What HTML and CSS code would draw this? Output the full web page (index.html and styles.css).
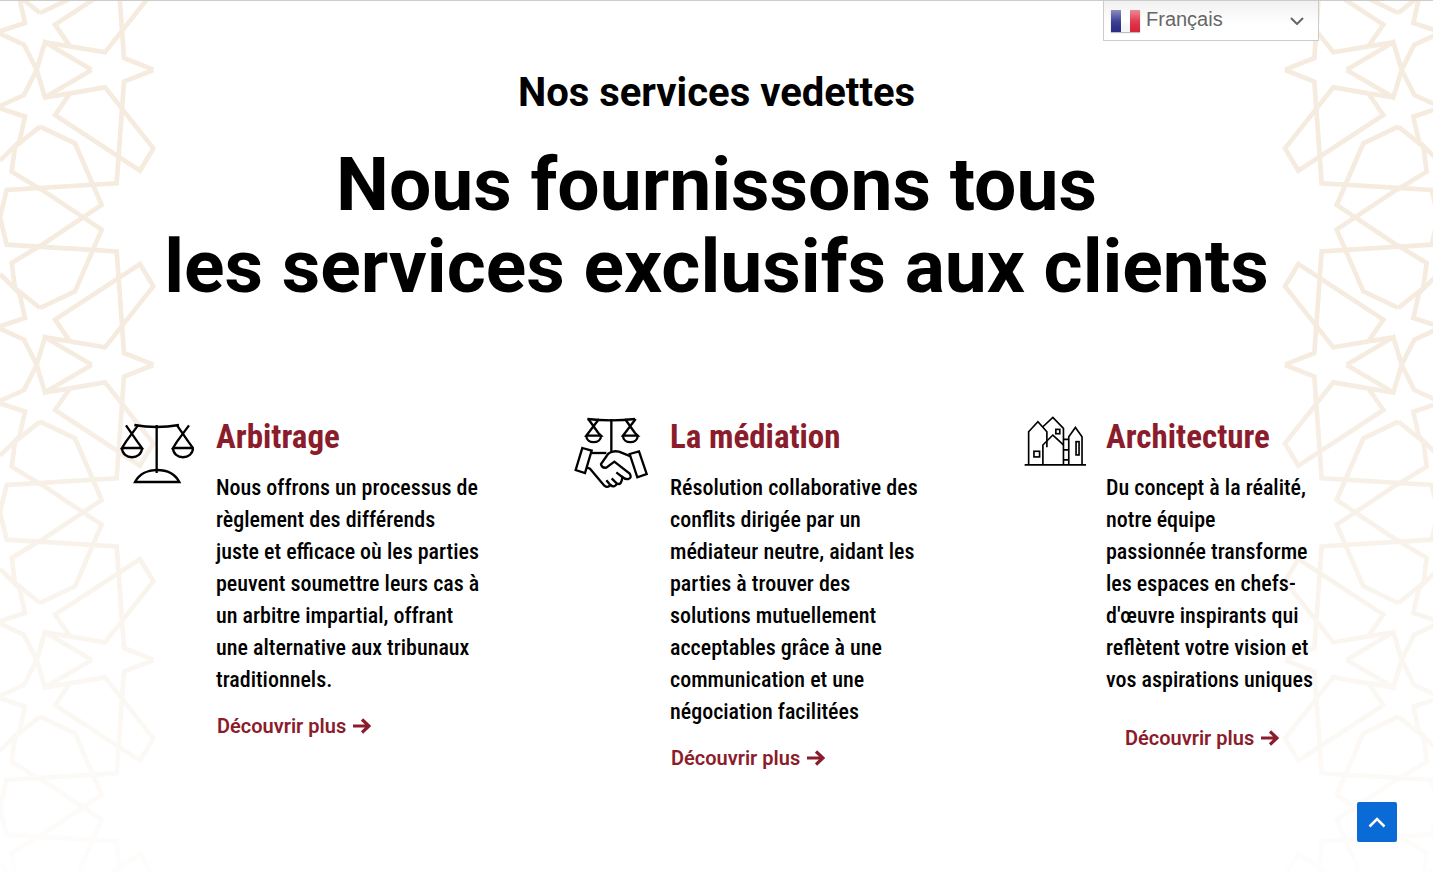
FILE: index.html
```html
<!DOCTYPE html>
<html>
<head>
    <meta charset="UTF-8">
    <title>Nos services vedettes</title>
    <link rel="stylesheet" href="styles.css">
</head>
<body>
    <!-- Star pattern down both sides of the page -->
    <svg class="bg-pattern" viewBox="0 0 4299 2616" aria-hidden="true">
        <defs>
            <g id="half">
                <polyline points="460,210 372,245 350,550 20,570 0,652"/>
                <polyline points="275,210 135,292 110,210 72,285 0,318"/>
                <polyline points="210,280 315,262 460,445 420,512 165,345 210,280"/>
                <polyline points="135,292 210,280"/>
                <polyline points="0,325 75,350 58,425 0,482"/>
                <polyline points="120,380 45,440 35,515 125,570"/>
                <polyline points="120,380 225,430 305,615 125,735"/>
            </g>
            <g id="tile">
                <use href="#half"/>
                <use href="#half" transform="matrix(1 0 0 -1 0 1304)"/>
            </g>
            <g id="column">
                <use href="#tile" transform="translate(0 -885)"/>
                <use href="#tile"/>
                <use href="#tile" transform="translate(0 885)"/>
                <use href="#tile" transform="translate(0 1770)"/>
            </g>
        </defs>
        <use href="#column"/>
        <use href="#column" transform="matrix(-1 0 0 1 4315 0)"/>
    </svg>

    <div class="lang-select">
        <svg class="flag" viewBox="0 0 29 22">
            <defs>
                <linearGradient id="gloss" x1="0" y1="0" x2="0" y2="1">
                    <stop offset="0" stop-color="#fff" stop-opacity="0.45"/>
                    <stop offset="0.5" stop-color="#fff" stop-opacity="0.1"/>
                    <stop offset="1" stop-color="#000" stop-opacity="0.04"/>
                </linearGradient>
            </defs>
            <rect width="10" height="22" fill="#2c2f8c"/>
            <rect x="10" width="9" height="22" fill="#fff"/>
            <rect x="19" width="10" height="22" fill="#e0283f"/>
            <rect width="29" height="22" fill="url(#gloss)"/>
        </svg>
        <span class="lang-name">Français</span>
        <svg class="lang-arrow" viewBox="0 0 14 8"><polyline points="1,1 7,7 13,1"/></svg>
    </div>

    <header class="intro">
        <h3>Nos services vedettes</h3>
        <h1>Nous fournissons tous<br>les services exclusifs aux clients</h1>
    </header>

    <section class="services">
        <article class="service">
            <div class="service-icon">
                <svg class="icon-scales" viewBox="30 40 222 186">
                    <path d="M73 46 Q140 58 207 46"/>
                    <path d="M140 46 V190"/>
                    <path d="M75 217 H208 C195 192 168 181 141 181 C115 181 88 192 75 217 Z"/>
                    <path d="M48 47 L82 96 M84 47 L48 96 L36 115 H96 L82 96"/>
                    <path d="M36 115 C36 152 96 152 96 115"/>
                    <path d="M201 47 L235 96 M237 47 L201 96 L189 115 H249 L235 96"/>
                    <path d="M189 115 C189 152 249 152 249 115"/>
                </svg>
            </div>
            <div class="service-body">
                <h4>Arbitrage</h4>
                <p>Nous offrons un processus de<br>règlement des différends<br>juste et efficace où les parties<br>peuvent soumettre leurs cas à<br>un arbitre impartial, offrant<br>une alternative aux tribunaux<br>traditionnels.</p>
                <a class="more" href="#">Découvrir plus <svg viewBox="0 0 18 16"><path d="M0 8 H16 M9 1.5 L16 8 L9 14.5"/></svg></a>
            </div>
        </article>

        <article class="service">
            <div class="service-icon">
                <svg class="icon-hands" viewBox="25 18 225 222">
                    <path d="M65 30 Q137 38 208 30"/>
                    <path d="M137 30 V128"/>
                    <path d="M68 30 L98 72 M100 30 L68 72 L62 80 H106 L98 72"/>
                    <path d="M62 80 C62 106 106 106 106 80"/>
                    <path d="M178 30 L208 72 M210 30 L178 72 L172 80 H216 L208 72"/>
                    <path d="M172 80 C172 106 216 106 216 80"/>
                    <path d="M50 117 L78 125 L58 192 L30 183 Z"/>
                    <path d="M192 135 L220 127 L243 195 L215 205 Z"/>
                    <path d="M78 132 H122"/>
                    <path d="M195 142 L160 128 Q140 124 128 134 L106 165 Q108 178 122 176 L146 158 L192 194 Q200 206 188 210 Q178 212 168 202"/>
                    <path d="M62 175 L73 179 L116 230 Q126 238 134 228 L122 214"/>
                    <path d="M134 228 Q146 238 154 224 L138 208"/>
                    <path d="M154 224 Q168 230 170 204 L152 190"/>
                </svg>
            </div>
            <div class="service-body">
                <h4>La médiation</h4>
                <p>Résolution collaborative des<br>conflits dirigée par un<br>médiateur neutre, aidant les<br>parties à trouver des<br>solutions mutuellement<br>acceptables grâce à une<br>communication et une<br>négociation facilitées</p>
                <a class="more" href="#">Découvrir plus <svg viewBox="0 0 18 16"><path d="M0 8 H16 M9 1.5 L16 8 L9 14.5"/></svg></a>
            </div>
        </article>

        <article class="service service-narrow">
            <div class="service-icon">
                <svg class="icon-houses" viewBox="28 18 190 150">
                    <path d="M30 165 H215"/>
                    <path d="M42 165 V65 L70 35 L97 65 V112"/>
                    <path d="M85 50 L115 22 L147 55 V165"/>
                    <path d="M85 165 V105 L115 75 L147 105"/>
                    <path d="M163 165 V80 L183 52 L203 80 V165"/>
                    <path d="M147 88 H163 M147 120 H163 M147 150 H163"/>
                    <rect x="58" y="124" width="17" height="17"/>
                    <rect x="124" y="58" width="12" height="13"/>
                    <rect x="185" y="95" width="9" height="40"/>
                </svg>
            </div>
            <div class="service-body">
                <h4>Architecture</h4>
                <p>Du concept à la réalité,<br>notre équipe<br>passionnée transforme<br>les espaces en chefs-<br>d'œuvre inspirants qui<br>reflètent votre vision et<br>vos aspirations uniques</p>
                <a class="more" href="#">Découvrir plus <svg viewBox="0 0 18 16"><path d="M0 8 H16 M9 1.5 L16 8 L9 14.5"/></svg></a>
            </div>
        </article>
    </section>

    <a class="to-top" href="#"><svg viewBox="0 0 18 11"><polyline points="1.5,9.5 9,2 16.5,9.5"/></svg></a>
</body>
</html>
```
FILE: styles.css
```css
body {
    margin: 0;
    height: 871px;
    overflow: hidden;
    position: relative;
    border-top: 1px solid #ccc;
    background-color: #fff;
    font-family: Roboto, Arial, sans-serif;
    color: #000;
}

.bg-pattern {
    position: absolute;
    top: -1px;
    left: 0;
    width: 1433px;
    height: 872px;
    fill: none;
    stroke: #f5ebdf;
    stroke-width: 14;
    filter: blur(0.5px);
    -webkit-mask-image: linear-gradient(#000 0, #000 38%, rgba(0, 0, 0, 0.1) 100%);
    mask-image: linear-gradient(#000 0, #000 38%, rgba(0, 0, 0, 0.1) 100%);
}

.lang-select {
    position: absolute;
    top: 0;
    left: 1103px;
    width: 216px;
    height: 40px;
    box-sizing: border-box;
    display: flex;
    align-items: center;
    padding: 0 14px 2px 7px;
    border: 1px solid #ccc;
    border-top: none;
    background: linear-gradient(#f1f1f1, #fff 60%);
}

.flag {
    width: 29px;
    height: 22px;
    margin-top: 2px;
    box-shadow: 0 1px 1px rgba(0, 0, 0, 0.25);
}

.lang-name {
    flex: 1;
    margin-left: 6px;
    font-family: "Liberation Sans", Arial, sans-serif;
    font-size: 20px;
    color: #666;
}

.lang-arrow {
    width: 14px;
    height: 8px;
    margin-top: 2px;
    fill: none;
    stroke: #666;
    stroke-width: 2;
}

.intro {
    position: relative;
    padding-top: 68px;
    text-align: center;
}

.intro h3 {
    margin: 0;
    font-size: 40px;
    line-height: 48px;
    font-weight: 700;
}

.intro h1 {
    margin: 26px 0 0;
    font-size: 75px;
    line-height: 82px;
    font-weight: 700;
}

.services {
    position: relative;
    display: grid;
    grid-template-columns: 454px 450px 1fr;
    margin-top: 110px;
    padding-left: 120px;
}

.service {
    display: flex;
}

.service-icon {
    flex: 0 0 96px;
    margin-top: -2px;
}

.service-narrow .service-icon {
    flex-basis: 82px;
}

.service-icon svg {
    display: block;
    fill: none;
    stroke: #000;
    stroke-width: 7;
}

.icon-scales {
    width: 74px;
    height: 62px;
    margin-top: 8px;
}

.icon-hands {
    width: 75px;
    height: 74px;
}

.icon-houses {
    width: 63px;
    height: 50px;
    margin-top: 1px;
    stroke-width: 5 !important;
}

.service-body h4 {
    margin: 0;
    font-size: 33px;
    line-height: 40px;
    font-weight: 700;
    font-stretch: 75%;
    color: #8b1c2b;
}

.service-body p {
    margin: 15px 0 0;
    font-size: 22px;
    line-height: 32px;
    font-weight: 500;
    font-stretch: 75%;
    white-space: nowrap;
}

.more {
    display: inline-flex;
    align-items: center;
    gap: 7px;
    margin: 18px 0 0 1px;
    font-size: 20px;
    line-height: 24px;
    font-weight: 600;
    color: #8b1c2b;
    text-decoration: none;
}

.more svg {
    width: 18px;
    height: 16px;
    fill: none;
    stroke: #8b1c2b;
    stroke-width: 3.2;
}

.service-narrow .more {
    margin: 30px 0 0 19px;
}

.to-top {
    position: absolute;
    top: 801px;
    left: 1357px;
    width: 40px;
    height: 40px;
    display: flex;
    align-items: center;
    justify-content: center;
    border-radius: 2px;
    background-color: #0a6bd6;
}

.to-top svg {
    width: 18px;
    height: 11px;
    fill: none;
    stroke: #fff;
    stroke-width: 2.5;
}
```
